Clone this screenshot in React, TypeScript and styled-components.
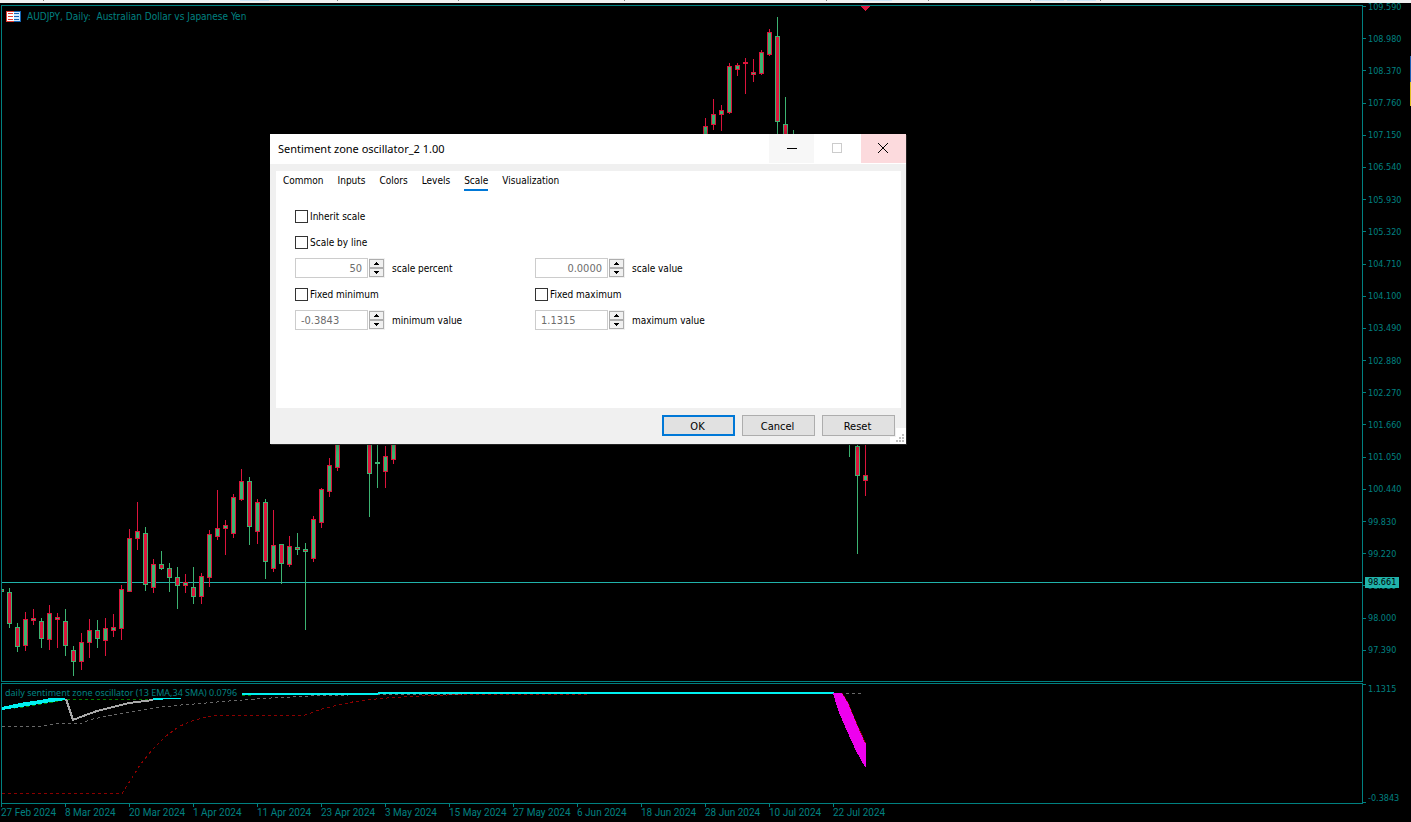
import React from "react";
import styled, { createGlobalStyle } from "styled-components";

const TEAL = "#008080";
const PRICE_LINE = "#20b2aa";
const BULL = "#3cb371";
const BEAR = "#dc143c";
const UI_FONT = `"DejaVu Sans Condensed", "DejaVu Sans", sans-serif`;

const GlobalStyle = createGlobalStyle`
  *, *::before, *::after { box-sizing: border-box; }
  body { margin: 0; background: #000; font-family: ${UI_FONT}; font-size: 10px; }
  ol { margin: 0; padding: 0; list-style: none; }
`;

const Terminal = styled.main`
  position: relative;
  display: flex;
  flex-direction: column;
  min-height: 100vh;
  background: #000;
  overflow: hidden;
`;

const ToolbarStrip = styled.div`
  height: 3px;
  margin-bottom: 2px;
  background: #f0f0f0;
`;

const ToolbarEdge = styled.svg`
  display: block;
  width: 100%;
  height: 3px;
`;

const ChartArea = styled.div`
  flex: 1;
  display: grid;
  grid-template-columns: minmax(0, 1fr) 48px;
  grid-template-rows: 1fr 121px 18px;
  margin-left: 1px;
`;

const Pane = styled.section<{ $spaced?: boolean }>`
  position: relative;
  border: 1px solid ${TEAL};
  margin-bottom: ${(p) => (p.$spaced ? 1 : 0)}px;
  min-height: 0;
`;

const Plot = styled.svg`
  position: absolute;
  inset: 0;
  width: 100%;
  height: 100%;
  shape-rendering: crispEdges;
`;

const PaneTitle = styled.h1`
  position: absolute;
  top: 4px;
  left: 4px;
  display: flex;
  align-items: center;
  gap: 6px;
  margin: 0;
  font-size: 10px;
  font-weight: 400;
  line-height: 13px;
  color: ${TEAL};
  white-space: pre;
`;

const IndicatorTitle = styled.h2`
  position: absolute;
  top: 2px;
  left: 0;
  width: 240px;
  height: 12px;
  margin: 0;
  padding-left: 3px;
  background: #000;
  font-family: "Noto Sans", sans-serif;
  font-size: 9px;
  font-weight: 400;
  line-height: 13px;
  color: ${TEAL};
  white-space: nowrap;
`;

const PriceAxis = styled.ol`
  position: relative;
  display: flex;
  flex-direction: column;
  justify-content: space-between;
  margin-top: -4px;
  padding-bottom: 27px;
`;

const IndicatorAxis = styled(PriceAxis)`
  margin-top: 0;
  padding-bottom: 0;
`;

const AxisLabel = styled.li<{ $tick?: "start" | "center" | "end" }>`
  display: flex;
  align-items: ${(p) => (p.$tick === "start" ? "flex-start" : p.$tick === "end" ? "flex-end" : "center")};
  gap: 2px;
  height: 11px;
  line-height: 12px;
  font-size: 9px;
  color: ${TEAL};
  &::before { content: ""; width: 3px; height: 1px; margin: 1px 0; background: ${TEAL}; }
`;

const CurrentPrice = styled.li`
  position: absolute;
  top: 576px;
  left: 2px;
  width: 34px;
  padding-left: 3px;
  background: ${PRICE_LINE};
  color: #000;
  font-size: 9px;
  line-height: 11px;
`;

const TimeAxis = styled.ol`
  grid-column: 1 / -1;
  display: grid;
  grid-auto-flow: column;
  grid-auto-columns: 64px;
  justify-content: start;
  color: ${TEAL};
  font-family: Roboto, sans-serif;
`;

const TimeLabel = styled.li`
  line-height: 12px;
  white-space: nowrap;
  &::before { content: ""; display: block; width: 1px; height: 3px; background: ${TEAL}; }
`;

const EdgeMarker = styled.div`
  position: absolute;
  top: 56px;
  right: 0;
  width: 1px;
  height: 50px;
  background: linear-gradient(#1f5fb4 52%, #e0c020 52%);
`;

const Dialog = styled.form`
  position: absolute;
  top: 134px;
  left: 270px;
  width: 636px;
  background: #f0f0f0;
  color: #000;
  box-shadow: 1px 1px 0 #222, 0 0 10px rgba(0, 0, 0, 0.35);
`;

const TitleBar = styled.header`
  display: flex;
  align-items: flex-start;
  justify-content: space-between;
  height: 30px;
  padding-left: 8px;
  background: #fff;
`;

const DialogTitle = styled.h2`
  margin: 0;
  font-family: "Noto Sans", sans-serif;
  font-size: 11px;
  font-weight: 400;
  line-height: 29px;
`;

const WindowButtons = styled.div`
  display: flex;
  gap: 1px;
`;

const WindowButton = styled.button<{ $bg: string }>`
  display: grid;
  place-items: center;
  width: 45px;
  height: 29px;
  padding: 0;
  border: 0;
  background: ${(p) => p.$bg};
  svg { shape-rendering: crispEdges; }
`;

const DialogBody = styled.div`
  height: 237px;
  margin: 7px 5px 0 6px;
  padding: 2px 0 0 7px;
  background: #fff;
`;

const Tabs = styled.nav`
  display: flex;
  gap: 14px;
`;

const Tab = styled.button<{ $active?: boolean }>`
  height: 18px;
  padding: 0;
  border: 0;
  border-bottom: 2px solid ${(p) => (p.$active ? "#0078d7" : "transparent")};
  background: none;
  font: 10px/16px ${UI_FONT};
  color: #000;
`;

const Fields = styled.div`
  display: grid;
  grid-template-columns: 240px 240px;
  grid-auto-rows: 20px;
  row-gap: 6px;
  padding: 15px 0 0 12px;
`;

const CheckLabel = styled.label<{ $wide?: boolean }>`
  grid-column: ${(p) => (p.$wide ? "1 / -1" : "auto")};
  display: flex;
  align-items: center;
  gap: 2px;
`;

const CheckBox = styled.input`
  appearance: none;
  width: 13px;
  height: 13px;
  margin: 0;
  border: 1px solid #333;
  background: #fff;
`;

const SpinField = styled.div`
  display: flex;
  align-items: center;
  gap: 1px;
  label { padding-left: 6px; }
`;

const SpinInput = styled.input<{ $align: "left" | "right" }>`
  width: 73px;
  height: 20px;
  padding: 0 5px;
  border: 1px solid #ccc;
  background: #fff;
  color: #6d6d6d;
  font: 11px ${UI_FONT};
  text-align: ${(p) => p.$align};
`;

const Stepper = styled.div`
  display: flex;
  flex-direction: column;
  width: 16px;
  padding: 1px 1px 1px 0;
  background: #f0f0f0;
`;

const StepButton = styled.button`
  display: grid;
  place-items: center;
  height: 9px;
  padding: 0;
  border: 1px solid #adadad;
  background: #f0f0f0;
  svg { display: block; shape-rendering: crispEdges; }
`;

const Footer = styled.footer`
  display: flex;
  justify-content: flex-end;
  gap: 7px;
  padding: 7px 11px 8px;
`;

const PushButton = styled.button<{ $primary?: boolean }>`
  width: 73px;
  height: 21px;
  padding: 1px 2px 0 0;
  border: ${(p) => (p.$primary ? "2px solid #0078d7" : "1px solid #adadad")};
  background: #e1e1e1;
  color: #000;
  font: 11px ${UI_FONT};
`;

const SizeGrip = styled.svg`
  position: absolute;
  right: 0;
  bottom: 0;
`;

// [bar index, high, body top, body bottom, low, direction]; y values are in window pixels
type Candle = [number, number, number, number, number, "U" | "D"];
const candles: Candle[] = [
  [0, 588, 589, 592, 592, "D"], [1, 588, 592, 624, 628, "D"], [2, 623, 627, 647, 652, "D"],
  [3, 612, 619, 646, 651, "U"], [4, 609, 618, 621, 625, "U"], [5, 618, 621, 639, 648, "D"],
  [6, 605, 613, 640, 650, "U"], [7, 613, 617, 620, 648, "U"], [8, 609, 621, 646, 656, "D"],
  [9, 646, 650, 662, 676, "D"], [10, 633, 642, 662, 670, "U"], [11, 619, 630, 643, 658, "U"],
  [12, 620, 630, 639, 648, "D"], [13, 618, 628, 641, 656, "U"], [14, 614, 627, 631, 637, "U"],
  [15, 585, 589, 629, 640, "U"], [16, 529, 538, 592, 592, "U"], [17, 502, 531, 539, 550, "U"],
  [18, 527, 533, 585, 591, "D"], [19, 559, 564, 588, 593, "U"], [20, 551, 564, 569, 570, "D"],
  [21, 563, 568, 578, 592, "D"], [22, 567, 577, 586, 609, "D"], [23, 574, 582, 586, 593, "U"],
  [24, 567, 587, 597, 604, "D"], [25, 573, 576, 597, 604, "U"], [26, 530, 534, 578, 587, "U"],
  [27, 490, 528, 537, 540, "U"], [28, 520, 525, 529, 555, "U"], [29, 494, 497, 534, 538, "U"],
  [30, 469, 481, 500, 501, "U"], [31, 477, 481, 527, 545, "D"], [32, 499, 502, 532, 544, "U"],
  [33, 499, 502, 562, 579, "D"], [34, 510, 545, 569, 572, "U"], [35, 544, 544, 564, 584, "D"],
  [36, 536, 546, 565, 567, "U"], [37, 533, 547, 550, 555, "D"], [38, 543, 549, 552, 630, "D"],
  [39, 516, 519, 559, 562, "U"], [40, 488, 489, 523, 528, "U"], [41, 458, 465, 492, 497, "U"],
  [42, 430, 432, 468, 471, "U"], [46, 420, 430, 474, 517, "D"], [47, 430, 462, 464, 488, "D"],
  [48, 446, 456, 472, 488, "U"], [49, 420, 430, 460, 464, "U"], [88, 118, 126, 146, 150, "U"],
  [89, 99, 114, 125, 130, "U"], [90, 105, 110, 115, 131, "U"], [91, 63, 66, 113, 114, "U"],
  [92, 63, 65, 70, 76, "U"], [93, 58, 62, 64, 94, "U"], [94, 59, 72, 75, 82, "U"],
  [95, 50, 52, 74, 75, "U"], [96, 29, 32, 55, 56, "U"], [97, 17, 36, 122, 140, "D"],
  [98, 97, 124, 150, 160, "D"], [99, 130, 150, 170, 180, "D"], [106, 400, 410, 430, 457, "D"],
  [107, 430, 446, 476, 554, "D"], [108, 430, 475, 481, 496, "U"],
];

const prices = [
  "109.590", "108.980", "108.370", "107.760", "107.150", "106.540", "105.930", "105.320",
  "104.710", "104.100", "103.490", "102.880", "102.270", "101.660", "101.050", "100.440",
  "99.830", "99.220", "98.610", "98.000", "97.390",
];

const dates = [
  "27 Feb 2024", "8 Mar 2024", "20 Mar 2024", "1 Apr 2024", "11 Apr 2024", "23 Apr 2024",
  "3 May 2024", "15 May 2024", "27 May 2024", "6 Jun 2024", "18 Jun 2024", "28 Jun 2024",
  "10 Jul 2024", "22 Jul 2024",
];

function CandleBar({ bar }: { bar: Candle }) {
  const [index, high, top, bottom, low, dir] = bar;
  const x = 1 + index * 8;
  const outline = dir === "U" ? BEAR : BULL;
  const fill = dir === "U" ? BULL : BEAR;
  return (
    <g>
      <rect x={x} y={high} width={1} height={low - high} fill={outline} />
      <rect x={x - 2} y={top} width={5} height={bottom - top} fill={outline} />
      {bottom - top > 2 && <rect x={x - 1} y={top + 1} width={3} height={bottom - top - 2} fill={fill} />}
    </g>
  );
}

function SymbolIcon() {
  return (
    <svg width="15" height="11" shapeRendering="crispEdges" aria-hidden="true">
      <rect width="8" height="11" fill="#e03c31" />
      <rect x="8" width="7" height="11" fill="#1464b4" />
      <rect x="1" y="1" width="7" height="9" fill="#fff" />
      <rect x="8" y="1" width="6" height="9" fill="#cfe8ff" />
      <path d="M2 2h5v1H2zM2 5h5v1H2zM2 8h5v1H2z" fill="#e03c31" />
      <path d="M8 2h5v1H8zM8 5h5v1H8zM8 8h5v1H8z" fill="#1464b4" />
    </svg>
  );
}

function PriceChart() {
  return (
    <Plot aria-label="AUDJPY daily candles">
      <rect y="576" width="100%" height="1" fill={PRICE_LINE} />
      <g transform="translate(-2 -6)">
        {candles.map((bar) => <CandleBar key={bar[0]} bar={bar} />)}
        <path d="M861 6h9v1h-1v1h-1v1h-1v1h-1v1h-1v-1h-1v-1h-1v-1h-1v-1h-1z" fill={BEAR} />
      </g>
    </Plot>
  );
}

function OscillatorChart() {
  return (
    <Plot aria-label="Sentiment zone oscillator">
      <g transform="translate(-2 -684)" fill="none">
        <path d="M2 709.5L20 707.5L45 703.5L65 699.5H152M242 695.5H253" stroke="#008000" strokeDasharray="3 3" />
        <path
          d="M2 726.5H41L57 723.5H81L91 719.5L110 715.5L129 712.5L150 708.5L175 705.5L200 703.5L223 701.5L262 698.5L300 696.5L320 695.5L378 694.5H462M834 693.5H862"
          stroke="#696969"
          strokeDasharray="3 3"
        />
        <path
          d="M2 793.5H122L130 781L140 765L152 750L165 737L178 727L194 720L215 715.5H304L320 709.5L340 704.5L355 701.5L380 698.5L395 697.5L430 695.5L465 694.5H590"
          stroke="#8b0000"
          strokeDasharray="3 3"
        />
        <path d="M66 699L73 720L83 716L97 711L113 707L129 703L145 701L153 700" stroke="#a9a9a9" strokeWidth="2" />
        <path d="M2 707L20 703L40 700L50 698H65V700L45 703L27 706L2 710Z" fill="#00f0f0" />
        <path d="M153 698H181V699H163V700H153Z" fill="#00f0f0" />
        <path d="M242 693H378V692H834V694H378V695H242Z" fill="#00f0f0" />
        <path d="M834 693H842L848 703L857 725L866 744" stroke="#8b0000" />
        <path d="M833 693H842L848 703L857 725L865 743H866V767H865L856 751L847 731L838 710Z" fill="#ee00ee" />
      </g>
    </Plot>
  );
}

function StripMarks() {
  return (
    <ToolbarEdge aria-hidden="true">
      {[240, 863, 1035, 1067].map((x) => <rect key={x} x={x} y="0" width="29" height="1" fill="#cce4f7" />)}
      {[43, 337, 458, 624, 826, 928, 1030, 1100].map((x) => <rect key={x} x={x} y="0" width="1" height="1" fill="#808080" />)}
    </ToolbarEdge>
  );
}

function Spin({ id, label, value, align }: { id: string; label: string; value: string; align: "left" | "right" }) {
  return (
    <SpinField>
      <SpinInput id={id} defaultValue={value} $align={align} disabled />
      <Stepper>
        <StepButton type="button" aria-label={`Increase ${label}`}>
          <svg width="5" height="3"><path d="M2 0h1v1h1v1h1v1H0V2h1V1h1z" /></svg>
        </StepButton>
        <StepButton type="button" aria-label={`Decrease ${label}`}>
          <svg width="5" height="3"><path d="M0 0h5v1H4v1H3v1H2V2H1V1H0z" /></svg>
        </StepButton>
      </Stepper>
      <label htmlFor={id}>{label}</label>
    </SpinField>
  );
}

function Check({ label, wide }: { label: string; wide?: boolean }) {
  return (
    <CheckLabel $wide={wide}>
      <CheckBox type="checkbox" />
      {label}
    </CheckLabel>
  );
}

const tabs = ["Common", "Inputs", "Colors", "Levels", "Scale", "Visualization"];

function IndicatorDialog() {
  return (
    <Dialog role="dialog" aria-labelledby="dialog-title" onSubmit={(e) => e.preventDefault()}>
      <TitleBar>
        <DialogTitle id="dialog-title">Sentiment zone oscillator_2 1.00</DialogTitle>
        <WindowButtons>
          <WindowButton type="button" $bg="#f7f7f7" aria-label="Minimize">
            <svg width="11" height="11"><path d="M1 5h10v1H1z" /></svg>
          </WindowButton>
          <WindowButton type="button" $bg="#fff" aria-label="Maximize" disabled>
            <svg width="11" height="11"><path d="M0.5 0.5h9v9h-9z" fill="none" stroke="#ccc" /></svg>
          </WindowButton>
          <WindowButton type="button" $bg="#fcdadd" aria-label="Close">
            <svg width="11" height="11">
              <path d="M0 0l10 10M10 0l-10 10" stroke="#000" shapeRendering="geometricPrecision" />
            </svg>
          </WindowButton>
        </WindowButtons>
      </TitleBar>
      <DialogBody>
        <Tabs>
          {tabs.map((name) => <Tab key={name} type="button" $active={name === "Scale"}>{name}</Tab>)}
        </Tabs>
        <Fields>
          <Check label="Inherit scale" wide />
          <Check label="Scale by line" wide />
          <Spin id="scale-percent" label="scale percent" value="50" align="right" />
          <Spin id="scale-value" label="scale value" value="0.0000" align="right" />
          <Check label="Fixed minimum" />
          <Check label="Fixed maximum" />
          <Spin id="minimum-value" label="minimum value" value="-0.3843" align="left" />
          <Spin id="maximum-value" label="maximum value" value="1.1315" align="left" />
        </Fields>
      </DialogBody>
      <Footer>
        <PushButton type="submit" $primary>OK</PushButton>
        <PushButton type="button">Cancel</PushButton>
        <PushButton type="reset">Reset</PushButton>
      </Footer>
      <SizeGrip width="16" height="16" shapeRendering="crispEdges" aria-hidden="true">
        <path d="M6 0h10v16H0V9h6z" fill="#fff" />
        <path d="M12 6h2v2h-2zM9 9h2v2H9zM12 9h2v2h-2zM6 12h2v2H6zM9 12h2v2H9zM12 12h2v2h-2z" fill="#bfbfbf" />
      </SizeGrip>
    </Dialog>
  );
}

export default function App() {
  return (
    <>
      <GlobalStyle />
      <Terminal>
        <ToolbarStrip><StripMarks /></ToolbarStrip>
        <ChartArea>
          <Pane $spaced>
            <PriceChart />
            <PaneTitle>
              <SymbolIcon />
              {"AUDJPY, Daily:  Australian Dollar vs Japanese Yen"}
            </PaneTitle>
          </Pane>
          <PriceAxis>
            {prices.map((price) => <AxisLabel key={price}>{price}</AxisLabel>)}
            <CurrentPrice>98.661</CurrentPrice>
          </PriceAxis>
          <Pane>
            <OscillatorChart />
            <IndicatorTitle>daily sentiment zone oscillator (13 EMA,34 SMA) 0.0796</IndicatorTitle>
          </Pane>
          <IndicatorAxis>
            <AxisLabel $tick="start">1.1315</AxisLabel>
            <AxisLabel $tick="end">-0.3843</AxisLabel>
          </IndicatorAxis>
          <TimeAxis>
            {dates.map((date) => <TimeLabel key={date}>{date}</TimeLabel>)}
          </TimeAxis>
        </ChartArea>
        <EdgeMarker />
        <IndicatorDialog />
      </Terminal>
    </>
  );
}
